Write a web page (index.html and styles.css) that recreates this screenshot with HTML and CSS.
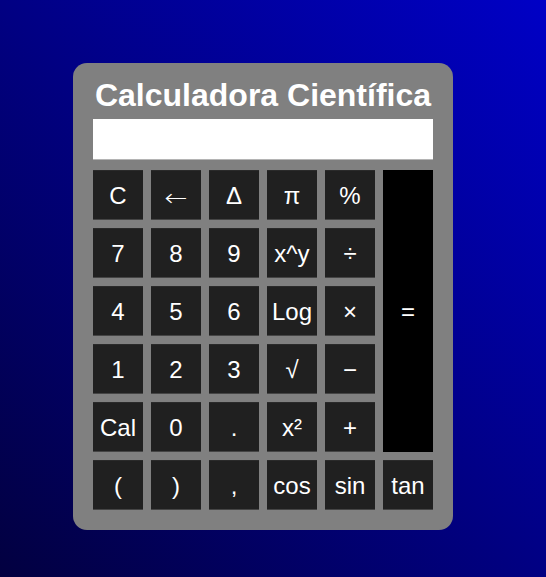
FILE: index.html
```html
<!DOCTYPE html>
<html lang="pt">
<head>
<meta charset="utf-8">
<title>Calculadora Científica</title>
<link rel="stylesheet" href="styles.css">
</head>
<body>
<div class="calc">
  <h1 class="title">Calculadora Científica</h1>
  <input class="display" type="text" value="">
  <div class="keys">
    <button class="key">C</button>
    <button class="key"><span class="arrow">←</span></button>
    <button class="key">Δ</button>
    <button class="key">π</button>
    <button class="key">%</button>
    <button class="key equals">=</button>
    <button class="key">7</button>
    <button class="key">8</button>
    <button class="key">9</button>
    <button class="key">x^y</button>
    <button class="key">÷</button>
    <button class="key">4</button>
    <button class="key">5</button>
    <button class="key">6</button>
    <button class="key">Log</button>
    <button class="key">×</button>
    <button class="key">1</button>
    <button class="key">2</button>
    <button class="key">3</button>
    <button class="key">√</button>
    <button class="key">−</button>
    <button class="key">Cal</button>
    <button class="key">0</button>
    <button class="key">.</button>
    <button class="key">x²</button>
    <button class="key">+</button>
    <button class="key">(</button>
    <button class="key">)</button>
    <button class="key">,</button>
    <button class="key">cos</button>
    <button class="key">sin</button>
    <button class="key">tan</button>
  </div>
</div>
</body>
</html>
```

FILE: styles.css
```css
html, body {
  margin: 0;
  height: 100%;
}
body {
  background: linear-gradient(to top right, #020040, #0000c6);
  font-family: "Liberation Sans", Arial, sans-serif;
  overflow: hidden;
}
.calc {
  width: 340px;
  margin: 63px 0 0 73px;
  padding: 14px 20px 20px;
  background: #808080;
  border-radius: 14px;
}
.title {
  margin: 0 0 5px;
  font-size: 32px;
  font-weight: bold;
  color: #ffffff;
  text-align: center;
  white-space: nowrap;
}
.display {
  display: block;
  box-sizing: border-box;
  width: 340px;
  height: 41px;
  margin: 0 0 10px;
  padding: 0 8px;
  border: none;
  border-bottom: 1px solid #b4b4b4;
  background: #ffffff;
  font-family: "Liberation Sans", Arial, sans-serif;
  font-size: 24px;
  outline: none;
}
.keys {
  display: grid;
  grid-template-columns: repeat(6, 50px);
  grid-auto-rows: 50px;
  gap: 8px;
}
.key {
  display: flex;
  align-items: center;
  justify-content: center;
  min-width: 0;
  padding: 1px 0 0;
  border: none;
  border-top: 1px solid #2a2a2a;
  border-bottom: 1px solid #454545;
  background: #202020;
  color: #ffffff;
  font-family: "Liberation Sans", Arial, sans-serif;
  font-size: 24px;
}
.arrow {
  display: inline-block;
  font-family: "DejaVu Sans", sans-serif;
  font-weight: 300;
  transform: translateY(2px) scaleX(1.15);
}
.equals {
  grid-column: 6;
  grid-row: 1 / span 5;
  background: #000000;
  border-color: #000000;
}
```
